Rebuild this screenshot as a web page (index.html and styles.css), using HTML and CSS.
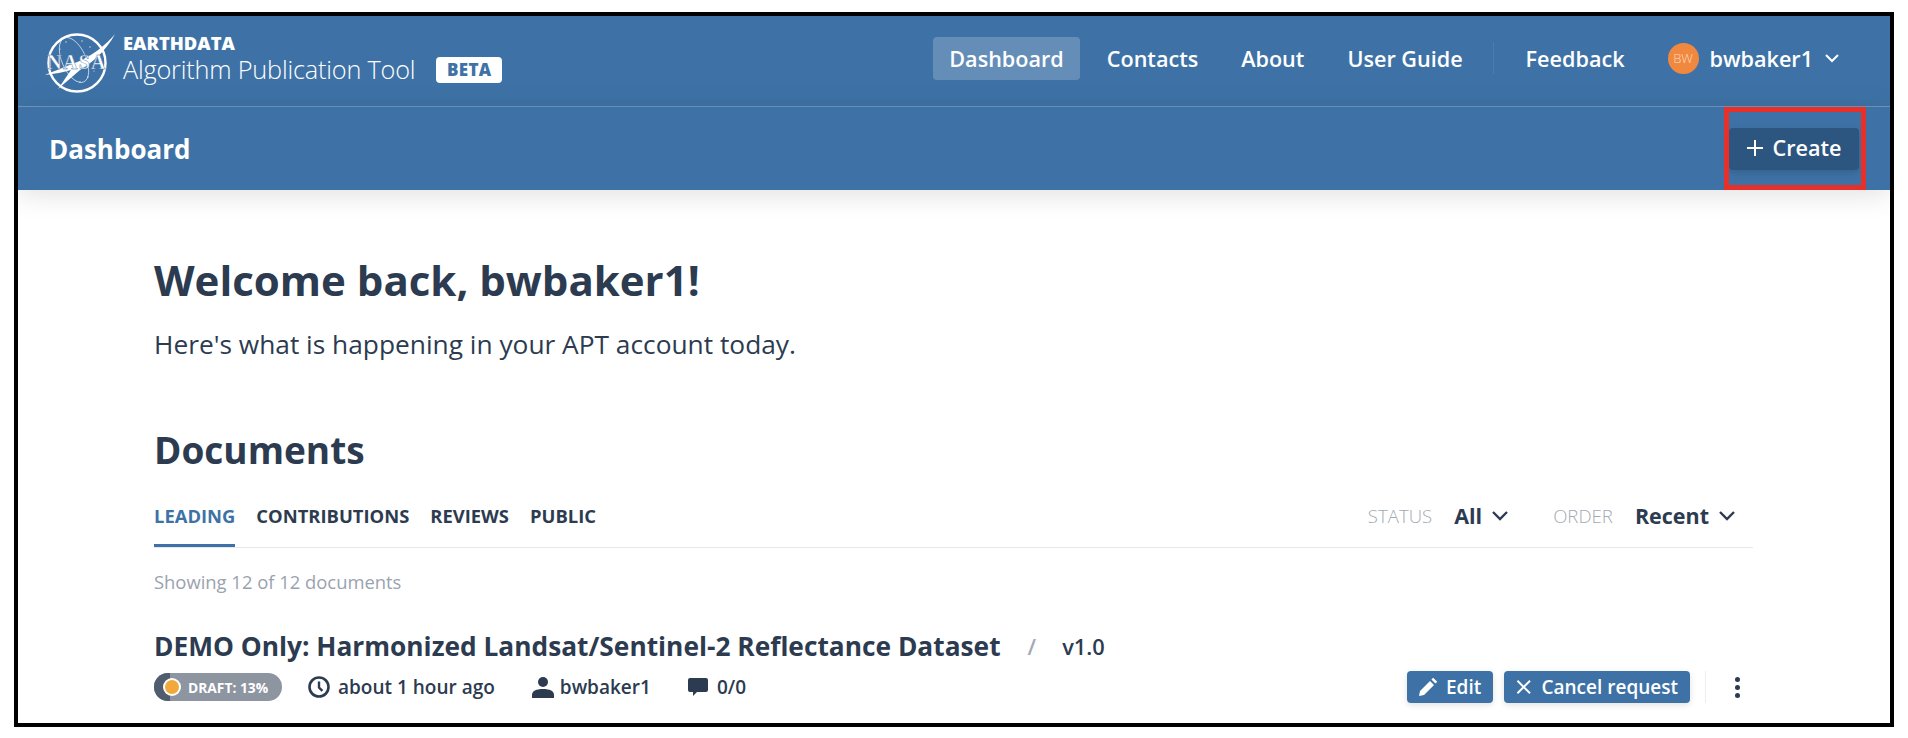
FILE: index.html
```html
<!DOCTYPE html>
<html lang="en">
<head>
    <meta charset="utf-8">
    <title>Dashboard - Algorithm Publication Tool</title>
    <link rel="stylesheet" href="styles.css">
</head>
<body>

<div class="frame">
    <!-- Top bar -->
    <header class="topbar">
        <div class="brand">
            <svg class="nasa-logo" width="80" height="68" viewBox="0 0 80 68">
                <circle cx="33" cy="36" r="28.5" fill="none" stroke="#fff" stroke-width="2.4"/>
                <ellipse cx="30" cy="33" rx="12" ry="24" transform="rotate(-24 30 33)" fill="none" stroke="#fff" stroke-width=".8" opacity=".75"/>
                <path d="M14 62 L36 43 C48 36 62 24 71 7 C62 18 46 31 28 37 C18 41 8 45 1 48 C10 47 20 45 27 43Z" fill="#fff"/>
                <g fill="#fff" opacity=".8">
                    <circle cx="22" cy="15" r=".7"/><circle cx="38" cy="14" r=".7"/><circle cx="46" cy="20" r=".7"/>
                    <circle cx="16" cy="22" r=".6"/><circle cx="44" cy="50" r=".7"/><circle cx="50" cy="44" r=".6"/>
                    <circle cx="24" cy="52" r=".6"/><circle cx="36" cy="55" r=".7"/>
                </g>
                <text x="33" y="42" class="nasa-word">NASA</text>
            </svg>
            <div class="brand-text">
                <div class="brand-top">EARTHDATA</div>
                <div class="brand-name">Algorithm Publication Tool</div>
            </div>
            <span class="beta">BETA</span>
        </div>
        <nav class="main-nav">
            <a class="nav-item active">Dashboard</a>
            <a class="nav-item">Contacts</a>
            <a class="nav-item">About</a>
            <a class="nav-item">User Guide</a>
            <span class="nav-divider"></span>
            <a class="nav-item">Feedback</a>
            <div class="user-menu">
                <span class="avatar">BW</span>
                <span class="user-name">bwbaker1</span>
                <svg class="chevron" width="16" height="10" viewBox="0 0 16 10"><path d="M2 2l6 6 6-6" fill="none" stroke="#fff" stroke-width="2"/></svg>
            </div>
        </nav>
    </header>

    <!-- Page title bar -->
    <div class="subbar">
        <div class="page-title">Dashboard</div>
        <div class="create-wrap">
            <button class="create-btn">
                <svg width="16" height="16" viewBox="0 0 16 16"><path d="M8 0v16M0 8h16" stroke="#fff" stroke-width="2"/></svg>
                Create
            </button>
            <span class="highlight"></span>
        </div>
    </div>

    <main class="content">
        <h1 class="welcome">Welcome back, bwbaker1!</h1>
        <p class="intro">Here's what is happening in your APT account today.</p>

        <h2 class="section-title">Documents</h2>

        <div class="tabs-row">
            <div class="tabs">
                <a class="tab current">LEADING</a>
                <a class="tab">CONTRIBUTIONS</a>
                <a class="tab">REVIEWS</a>
                <a class="tab">PUBLIC</a>
            </div>
            <div class="filters">
                <div class="filter">
                    <span class="filter-label">STATUS</span>
                    <span class="filter-value">All</span>
                    <svg width="18" height="11" viewBox="0 0 18 11"><path d="M2 2l7 7 7-7" fill="none" stroke="#2c3b50" stroke-width="2.4"/></svg>
                </div>
                <div class="filter">
                    <span class="filter-label">ORDER</span>
                    <span class="filter-value">Recent</span>
                    <svg width="18" height="11" viewBox="0 0 18 11"><path d="M2 2l7 7 7-7" fill="none" stroke="#2c3b50" stroke-width="2.4"/></svg>
                </div>
            </div>
        </div>

        <p class="showing">Showing 12 of 12 documents</p>

        <article class="doc">
            <div class="doc-head">
                <span class="doc-title">DEMO Only: Harmonized Landsat/Sentinel-2 Reflectance Dataset</span>
                <span class="doc-slash">/</span>
                <span class="doc-version">v1.0</span>
            </div>
            <div class="doc-meta">
                <div class="meta-left">
                    <span class="status-pill">
                        <span class="status-cap"><span class="status-dot"></span></span>
                        <span class="status-text">DRAFT: 13%</span>
                    </span>
                    <span class="meta-item clock-item">
                        <svg width="22" height="22" viewBox="0 0 22 22"><circle cx="11" cy="11" r="9.5" fill="none" stroke="#2c3b50" stroke-width="2.6"/><path d="M11 5.5v6l3.4 3.4" fill="none" stroke="#2c3b50" stroke-width="2.4"/></svg>
                        about 1 hour ago
                    </span>
                    <span class="meta-item user-item">
                        <svg width="22" height="22" viewBox="0 0 22 22"><circle cx="11" cy="6" r="5" fill="#2c3b50"/><path d="M0 22v-3c0-4 4-6 11-6s11 2 11 6v3z" fill="#2c3b50"/></svg>
                        bwbaker1
                    </span>
                    <span class="meta-item comment-item">
                        <svg width="22" height="20" viewBox="0 0 22 20"><path d="M3 1h16a2 2 0 0 1 2 2v10a2 2 0 0 1-2 2H10l-4 4v-4H3a2 2 0 0 1-2-2V3a2 2 0 0 1 2-2z" fill="#2c3b50"/></svg>
                        0/0
                    </span>
                </div>
                <div class="meta-right">
                    <button class="doc-btn edit-btn">
                        <svg width="20" height="20" viewBox="0 0 20 20"><path d="M1 19l1-5L12 4l4 4L6 18zM13.4 2.6l1.8-1.8 4 4-1.8 1.8z" fill="#fff"/></svg>
                        Edit
                    </button>
                    <button class="doc-btn cancel-btn">
                        <svg width="16" height="16" viewBox="0 0 16 16"><path d="M1.5 1.5l13 13M14.5 1.5l-13 13" stroke="#fff" stroke-width="2"/></svg>
                        Cancel request
                    </button>
                    <span class="btn-divider"></span>
                    <span class="kebab"><i></i><i></i><i></i></span>
                </div>
            </div>
        </article>
    </main>
</div>

</body>
</html>
```

FILE: styles.css
```css
body {
    font-family: "Open Sans", Arial, sans-serif;
    margin: 0;
    padding: 12px 0 0 14px;
    background-color: #fff;
    color: #2c3b50;
    overflow: hidden;
}

.frame {
    box-sizing: border-box;
    width: 1880px;
    height: 715px;
    border: 4px solid #000;
    overflow: hidden;
    background-color: #fff;
}

/* Top bar */
.topbar {
    box-sizing: border-box;
    height: 91px;
    display: flex;
    align-items: center;
    justify-content: space-between;
    padding: 0 50px 0 26px;
    background-color: #3e72a6;
    border-bottom: 1px solid #6f97bf;
}

.brand {
    display: flex;
    align-items: center;
    color: #fff;
}

.nasa-logo {
    width: 80px;
    height: 68px;
    margin-right: -1px;
}

.nasa-word {
    font-family: "Liberation Serif", serif;
    font-size: 20px;
    font-weight: 700;
    fill: #fff;
    stroke: #3e72a6;
    stroke-width: .4px;
    text-anchor: middle;
    letter-spacing: 1.2px;
}

.brand-text {
    width: 313px;
    margin-top: -3px;
}

.brand-top {
    font-size: 18.4px;
    font-weight: 800;
    line-height: 20px;
}

.brand-name {
    font-size: 25.3px;
    font-weight: 300;
    line-height: 33px;
    letter-spacing: -.2px;
}

.beta {
    box-sizing: border-box;
    height: 26px;
    margin-top: 17px;
    padding: 0 11px;
    border-radius: 4px;
    background-color: #fff;
    color: #3e72a6;
    font-size: 17px;
    font-weight: 800;
    line-height: 26px;
    letter-spacing: .3px;
}

.main-nav {
    display: flex;
    align-items: center;
    margin-top: -6px;
    color: #fff;
}

.nav-item {
    height: 43px;
    margin-right: 11px;
    padding: 0 16px;
    border-radius: 4px;
    font-size: 21.6px;
    font-weight: 600;
    line-height: 43px;
}

.nav-item.active {
    background-color: rgba(255, 255, 255, .2);
}

.nav-divider {
    width: 1px;
    height: 32px;
    margin: 0 16px 0 3px;
    background-color: #4c7cac;
}

.user-menu {
    display: flex;
    align-items: center;
    margin-left: 16px;
    font-size: 21.6px;
    font-weight: 600;
}

.avatar {
    width: 31px;
    height: 31px;
    margin-right: 11px;
    border-radius: 50%;
    background-color: #f0883f;
    color: #ffd9bd;
    font-size: 13px;
    font-weight: 300;
    line-height: 31px;
    text-align: center;
}

.chevron {
    margin-left: 11px;
}

/* Title bar */
.subbar {
    box-sizing: border-box;
    height: 83px;
    display: flex;
    align-items: center;
    justify-content: space-between;
    padding: 0 31px;
    background-color: #3e72a6;
    position: relative;
    box-shadow: 0 4px 28px rgba(0, 0, 0, .13);
}

.page-title {
    color: #fff;
    font-size: 26px;
    font-weight: 700;
}

.create-wrap {
    position: relative;
    display: flex;
}

.create-btn {
    box-sizing: border-box;
    width: 130px;
    height: 42px;
    display: flex;
    align-items: center;
    justify-content: center;
    gap: 10px;
    padding: 0 0 2px;
    border: 0;
    border-radius: 4px;
    background-color: #2c5580;
    color: #fff;
    font-family: inherit;
    font-size: 21.6px;
    font-weight: 600;
    box-shadow: 0 3px 8px rgba(0, 0, 0, .15);
}

.highlight {
    position: absolute;
    top: -21px;
    left: -5px;
    right: -7px;
    bottom: -20px;
    border: 5px solid #e8302a;
}

/* Main content */
.content {
    padding: 63px 137px 0 136px;
}

.welcome {
    margin: 0;
    font-size: 42px;
    font-weight: 700;
    line-height: 54px;
}

.intro {
    margin: 19px 0 0;
    font-size: 26.3px;
    line-height: 36px;
}

.section-title {
    margin: 64px 0 0;
    font-size: 37px;
    font-weight: 700;
    line-height: 48px;
}

.tabs-row {
    display: flex;
    align-items: center;
    justify-content: space-between;
    height: 56px;
    margin-top: 17px;
    border-bottom: 1px solid #e6e8eb;
}

.tabs {
    display: flex;
    align-self: stretch;
    gap: 21px;
}

.tab {
    box-sizing: border-box;
    height: 56px;
    font-size: 18.4px;
    font-weight: 700;
    line-height: 50px;
}

.tab.current {
    color: #3e72a6;
    border-bottom: 3px solid #3e72a6;
}

.filters {
    display: flex;
    gap: 44px;
    margin-top: -7px;
    padding-right: 17px;
}

.filter {
    display: flex;
    align-items: center;
}

.filter-label {
    margin-right: 22px;
    color: #a3aab5;
    font-size: 18.6px;
    font-weight: 300;
}

.filter-value {
    margin-right: 9px;
    font-size: 21.5px;
    font-weight: 700;
}

.showing {
    margin: 22px 0 0;
    color: #9aa2af;
    font-size: 18.4px;
    line-height: 24px;
}

.doc-head {
    display: flex;
    align-items: center;
    margin-top: 34px;
}

.doc-title {
    font-size: 26.3px;
    font-weight: 700;
    line-height: 36px;
}

.doc-slash {
    margin: 0 26px 0 27px;
    color: #a3aab5;
    font-size: 22px;
    font-weight: 600;
}

.doc-version {
    font-size: 21.8px;
    font-weight: 600;
}

.doc-meta {
    display: flex;
    align-items: center;
    justify-content: space-between;
    margin-top: 7px;
}

.meta-left,
.meta-right {
    display: flex;
    align-items: center;
}

.status-pill {
    display: flex;
    align-items: center;
    width: 128px;
    height: 28px;
    border-radius: 14px;
    overflow: hidden;
    background-color: #8d95a1;
}

.status-cap {
    position: relative;
    width: 16px;
    height: 28px;
    background-color: #4f5d6f;
}

.status-dot {
    position: absolute;
    top: 7px;
    left: 11px;
    width: 14px;
    height: 14px;
    border-radius: 50%;
    background-color: #f2a93b;
    box-shadow: 0 0 0 2px #fff;
}

.status-text {
    margin-left: 18px;
    color: #fff;
    font-size: 13.8px;
    font-weight: 700;
}

.meta-item {
    display: flex;
    align-items: center;
    font-size: 19px;
    font-weight: 600;
}

.clock-item {
    gap: 8px;
    margin-left: 26px;
}

.user-item {
    gap: 6px;
    margin-left: 37px;
}

.comment-item {
    gap: 8px;
    margin-left: 36px;
}

.doc-btn {
    display: flex;
    align-items: center;
    height: 32px;
    border: 0;
    border-radius: 4px;
    background-color: #3e72a6;
    color: #fff;
    font-family: inherit;
    font-size: 19px;
    font-weight: 600;
    white-space: nowrap;
    box-shadow: 0 2px 6px rgba(0, 0, 0, .12);
}

.edit-btn {
    width: 86px;
    gap: 8px;
    padding: 0 11px;
}

.cancel-btn {
    width: 186px;
    gap: 10px;
    margin-left: 11px;
    padding: 0 12px;
}

.btn-divider {
    width: 1px;
    height: 32px;
    margin-left: 15px;
    background-color: #eceef0;
}

.kebab {
    display: flex;
    flex-direction: column;
    gap: 3px;
    width: 5px;
    margin: 0 13px 0 29px;
}

.kebab i {
    width: 5px;
    height: 5px;
    border-radius: 50%;
    background-color: #2c3b50;
}
```
